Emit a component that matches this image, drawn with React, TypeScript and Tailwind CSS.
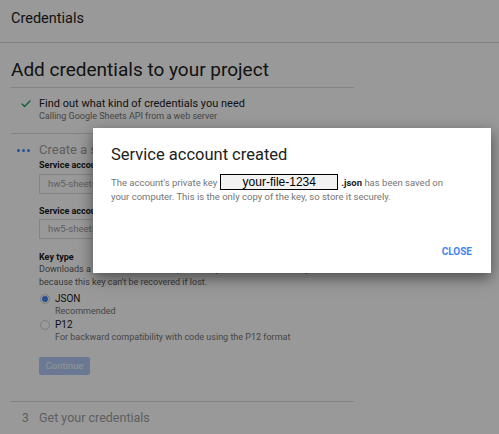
import { Check } from "lucide-react";

export default function App() {
  return (
    <div className="relative h-[434px] w-[499px] overflow-hidden bg-white font-['Roboto',sans-serif] text-[#212121]">
      {/* underlying page */}
      <div className="flex h-[43px] items-start border-b border-[#d6d6d6] px-[11px] pt-[8px] text-[14.5px]">
        Credentials
      </div>
      <div className="w-[354px] pl-[11px]">
        <h1 className="mt-[14px] text-[19px] leading-[26px]">Add credentials to your project</h1>
        <div className="mt-[4px] border-t border-[#dadada]" />

        <div className="flex pt-[9px] pb-[11px]">
          <div className="w-[28px] pl-[9px] pt-[1px]">
            <Check size={12} strokeWidth={2.5} className="text-[#0f9d58]" />
          </div>
          <div>
            <div className="text-[11px] leading-[14px]">Find out what kind of credentials you need</div>
            <div className="text-[9px] leading-[11px] text-[#757575]">Calling Google Sheets API from a web server</div>
          </div>
        </div>
        <div className="border-t border-[#dadada]" />

        <div className="flex pt-[8px]">
          <div className="flex w-[28px] gap-[2px] pl-[6px] pt-[7px]">
            <span className="h-[3px] w-[3px] rounded-full bg-[#4285f4]" />
            <span className="h-[3px] w-[3px] rounded-full bg-[#4285f4]" />
            <span className="h-[3px] w-[3px] rounded-full bg-[#4285f4]" />
          </div>
          <div className="flex-1">
            <div className="text-[13px] leading-[16px] text-[#9e9e9e]">Create a service account key</div>
            <div className="mt-[1px] text-[9px] font-bold leading-[12px]">Service account name</div>
            <div className="mt-[3px] flex h-[20px] w-[200px] items-center border border-[#dcdcdc] px-[8px] text-[9.5px] text-[#9e9e9e]">
              hw5-sheets
            </div>
            <div className="mt-[11px] text-[9px] font-bold leading-[12px]">Service account ID</div>
            <div className="mt-[2px] flex h-[20px] w-[200px] items-center border border-[#dcdcdc] px-[8px] text-[9.5px] text-[#9e9e9e]">
              hw5-sheets
            </div>
            <div className="mt-[13px] text-[9px] font-bold leading-[11px]">Key type</div>
            <div className="text-[9px] leading-[13px] text-[#616161]">
              Downloads a file that contains the private key. Store the file securely
              <br />
              because this key can't be recovered if lost.
            </div>
            <div className="mt-[3px] flex items-center gap-[5px] pl-[1px]">
              <span className="flex h-[10px] w-[10px] items-center justify-center rounded-full border border-[#d0d0d0]">
                <span className="h-[6px] w-[6px] rounded-full bg-[#4285f4]" />
              </span>
              <span className="text-[10px] leading-[13px]">JSON</span>
            </div>
            <div className="pl-[16px] text-[9px] leading-[12px] text-[#757575]">Recommended</div>
            <div className="mt-[1px] flex items-center gap-[5px] pl-[1px]">
              <span className="h-[10px] w-[10px] rounded-full border border-[#d0d0d0]" />
              <span className="text-[10px] leading-[13px]">P12</span>
            </div>
            <div className="pl-[16px] text-[9px] leading-[12px] text-[#757575]">
              For backward compatibility with code using the P12 format
            </div>
            <div className="mt-[14px] flex h-[18px] w-[51px] items-center justify-center rounded-[2px] bg-[#b3c9f5] text-[9.5px] text-[#f2f6fe]">
              Continue
            </div>
          </div>
        </div>
        <div className="mt-[26px] border-t border-[#dadada]" />
        <div className="flex h-[32px] items-center">
          <div className="w-[28px] pl-[11px] text-[12px] text-[#9e9e9e]">3</div>
          <div className="text-[12.5px] text-[#9e9e9e]">Get your credentials</div>
        </div>
        <div className="border-t border-[#dadada]" />
      </div>

      {/* scrim */}
      <div className="absolute inset-0 bg-black/40" />

      {/* dialog */}
      <div className="absolute left-[93px] top-[128px] flex h-[145px] w-[398px] flex-col bg-white px-[18px] shadow-[0_5px_14px_rgba(0,0,0,0.5)]">
        <div className="mt-[17px] text-[16.5px] leading-[20px] text-[#212121]">Service account created</div>
        <div className="mt-[9px] text-[9.5px] leading-[13px] text-[#757575]">
          <div className="flex items-center">
            <span>The account's private key</span>
            <span className="mx-[3px] flex h-[16px] w-[118px] items-center justify-center border border-black bg-[#f2f2f2] font-['Liberation_Sans',sans-serif] text-[12px] text-black">
              your-file-1234
            </span>
            <span className="font-bold text-[#212121]">.json</span>
            <span>&nbsp;has been saved on</span>
          </div>
          <div>your computer. This is the only copy of the key, so store it securely.</div>
        </div>
        <div className="mt-auto mb-[14px] flex justify-end pr-[1px]">
          <span className="text-[10px] font-bold text-[#4285f4]">CLOSE</span>
        </div>
      </div>
    </div>
  );
}
